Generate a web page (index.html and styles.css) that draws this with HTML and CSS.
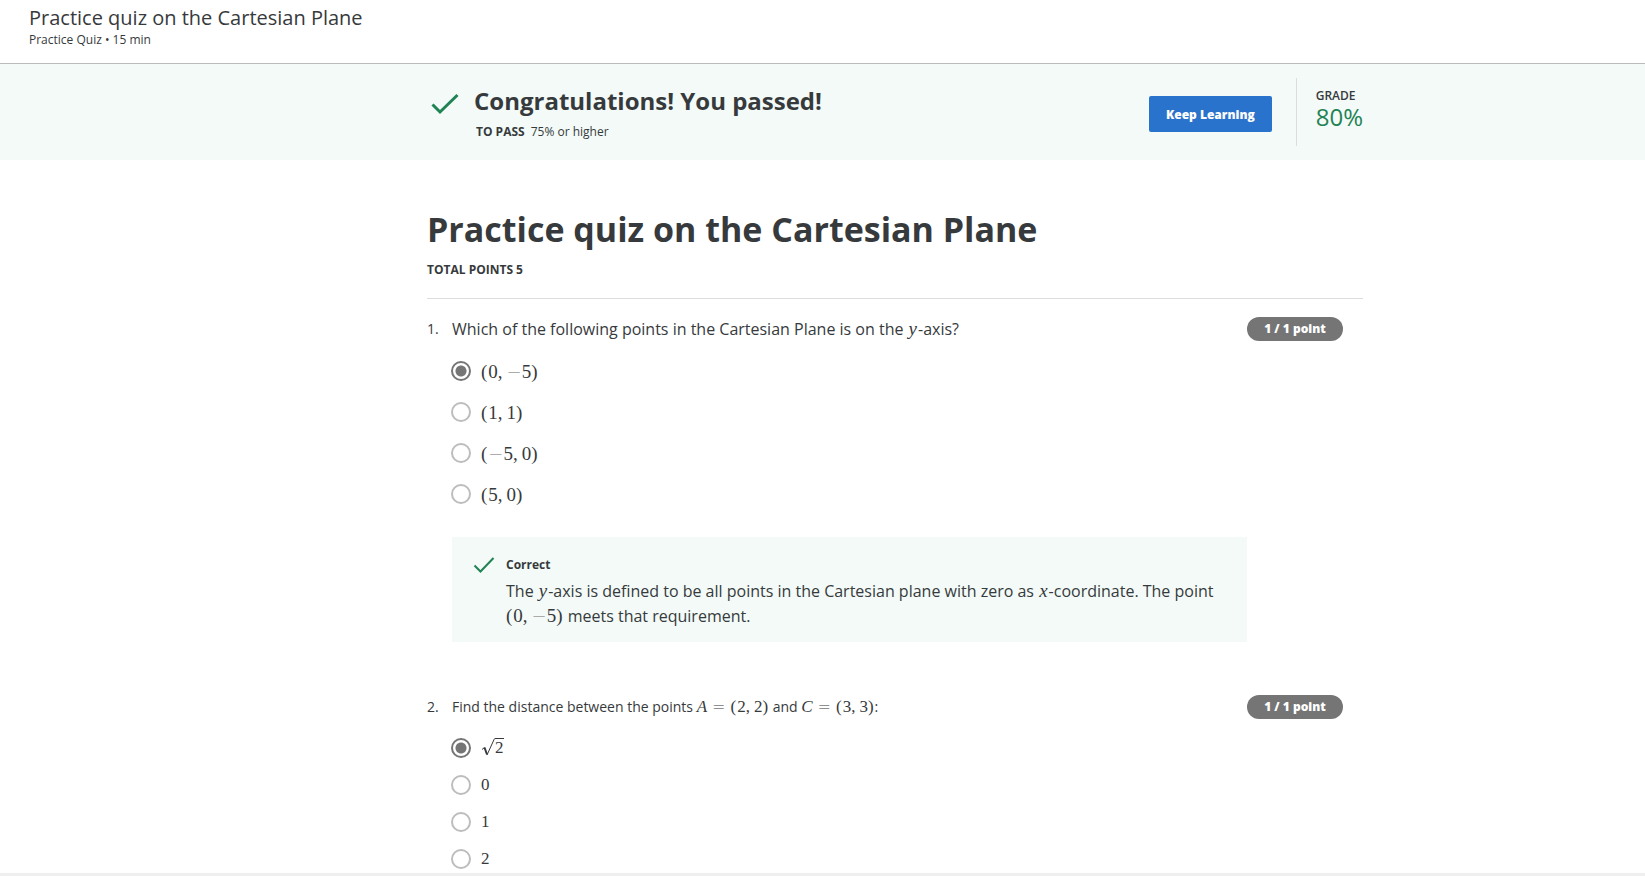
FILE: index.html
```html
<!DOCTYPE html>
<html lang="en">
<head>
<meta charset="utf-8">
<title>Practice quiz on the Cartesian Plane</title>
<link rel="stylesheet" href="styles.css">
</head>
<body>
<header class="topbar">
  <p class="topbar-title">Practice quiz on the Cartesian Plane</p>
  <p class="topbar-meta">Practice Quiz • 15 min</p>
</header>

<section class="banner">
  <div class="banner-inner">
    <svg class="banner-check" viewBox="0 0 28 22" aria-hidden="true"><path d="M1.5 11.5 9 19 26.500 2"/></svg>
    <div class="banner-text">
      <h2 class="banner-title">Congratulations! You passed!</h2>
      <p class="banner-pass"><strong>TO PASS</strong><span>75% or higher</span></p>
    </div>
    <button class="keep" type="button">Keep Learning</button>
    <div class="grade">
      <span class="grade-label">GRADE</span>
      <span class="grade-value">80%</span>
    </div>
  </div>
</section>

<main class="quiz">
  <h1 class="quiz-title">Practice quiz on the Cartesian Plane</h1>
  <p class="quiz-points">TOTAL POINTS 5</p>

  <section class="question question-large">
    <span class="number">1.</span>
    <div class="body">
      <p class="prompt" id="q1">Which of the following points in the Cartesian Plane is on the <i class="var">y</i>-axis?</p>
      <div class="options" role="radiogroup" aria-labelledby="q1">
        <label class="option"><input type="radio" name="q1" checked><span class="math"><span class="paren">(</span>0<span class="comma">,</span><span class="op">−</span>5<span class="paren">)</span></span></label>
        <label class="option"><input type="radio" name="q1"><span class="math"><span class="paren">(</span>1<span class="comma">,</span>1<span class="paren">)</span></span></label>
        <label class="option"><input type="radio" name="q1"><span class="math"><span class="paren">(</span><span class="op">−</span>5<span class="comma">,</span>0<span class="paren">)</span></span></label>
        <label class="option"><input type="radio" name="q1"><span class="math"><span class="paren">(</span>5<span class="comma">,</span>0<span class="paren">)</span></span></label>
      </div>
      <div class="feedback">
        <svg class="feedback-check" viewBox="0 0 22 18" aria-hidden="true"><path d="M1.500 9.500 7.500 15.500 20.500 2"/></svg>
        <div>
          <p class="feedback-title">Correct</p>
          <p class="feedback-text">The <i class="var">y</i>-axis is defined to be all points in the Cartesian plane with zero as <i class="var">x</i>-coordinate. The point <span class="math"><span class="paren">(</span>0<span class="comma">,</span><span class="op">−</span>5<span class="paren">)</span></span> meets that requirement.</p>
        </div>
      </div>
    </div>
    <span class="pill">1 / 1 point</span>
  </section>

  <section class="question question-small">
    <span class="number">2.</span>
    <div class="body">
      <p class="prompt" id="q2">Find the distance between the points <span class="math"><i>A</i><span class="rel">=</span><span class="paren">(</span>2<span class="comma">,</span>2<span class="paren">)</span></span> and <span class="math"><i>C</i><span class="rel">=</span><span class="paren">(</span>3<span class="comma">,</span>3<span class="paren">)</span></span>:</p>
      <div class="options" role="radiogroup" aria-labelledby="q2">
        <label class="option"><input type="radio" name="q2" checked><span class="math root"><svg class="radical" viewBox="0 0 14 19" role="img" aria-label="square root of"><path class="thin" d="M1 11.500 3.500 9.500"/><path class="thick" d="M3.500 9.500 6 16.500"/><path class="thin" d="M6 17 13.500 .500"/></svg><span class="radicand">2</span></span></label>
        <label class="option"><input type="radio" name="q2"><span class="math">0</span></label>
        <label class="option"><input type="radio" name="q2"><span class="math">1</span></label>
        <label class="option"><input type="radio" name="q2"><span class="math">2</span></label>
      </div>
    </div>
    <span class="pill">1 / 1 point</span>
  </section>
</main>
<footer class="bottom-edge"></footer>
</body>
</html>
```
FILE: styles.css
```css
* { box-sizing: border-box; }

body {
  margin: 0;
  height: 100vh;
  display: flex;
  flex-direction: column;
  background: #fff;
  color: #373a3c;
  font-family: "Open Sans", sans-serif;
  font-size: 16px;
}

h1, h2, p { margin: 0; }

.topbar {
  padding: 6px 29px 14px;
  border-bottom: 1px solid #bbb;
}
.topbar-title { font-size: 20px; line-height: 24px; }
.topbar-meta { padding-top: 1px; font-size: 12px; line-height: 18px; }

.banner { background: #f3faf8; padding-left: 145px; }
.banner-inner {
  max-width: 936px;
  margin: 0 auto;
  padding: 14px 0 14px 4px;
  display: flex;
  align-items: flex-start;
}
.banner-check {
  width: 28px;
  height: 22px;
  margin-top: 15px;
  fill: none;
  stroke: #1f8354;
  stroke-width: 3;
}
.banner-text { flex: 1; padding: 5px 0 0 15px; }
.banner-title { font-size: 24px; line-height: 36px; }
.banner-pass {
  display: flex;
  gap: 6px;
  padding: 4px 0 0 2px;
  font-size: 12px;
  line-height: 18px;
}
.keep {
  height: 36px;
  margin: 18px 24px 0 0;
  padding: 0 17px;
  border: 0;
  border-radius: 2px;
  background: #2a73cc;
  color: #fff;
  font-family: inherit;
  font-size: 12px;
  font-weight: 800;
}
.grade {
  height: 68px;
  padding: 10px 0 0 19px;
  border-left: 1px solid #ddd;
  display: flex;
  flex-direction: column;
}
.grade-label { font-size: 12px; line-height: 16px; font-weight: 600; }
.grade-value { font-size: 24px; line-height: 26px; color: #1f8354; }

.quiz {
  width: 100%;
  max-width: 1081px;
  min-height: 0;
  margin: 0 auto;
  padding: 44px 0 0 145px;
  flex: 1;
  overflow-y: auto;
  scrollbar-width: none;
}
.quiz-title { font-size: 34px; line-height: 50px; }
.quiz-points {
  padding: 7px 0 19px;
  border-bottom: 1px solid #ddd;
  font-size: 12px;
  line-height: 18px;
  font-weight: 700;
}

.question {
  display: grid;
  grid-template-columns: 25px 1fr 96px;
  padding-right: 20px;
}
.number { font-size: 14px; line-height: 24px; }
.question-large { padding-top: 18px; }
.question-small { padding-top: 53px; }
.question-large .prompt { line-height: 24px; }
.question-small .prompt { font-size: 14px; line-height: 24px; }

.options { display: flex; flex-direction: column; }
.question-large .options { padding-top: 9px; }
.question-small .options { padding-top: 10px; }
.option { display: flex; align-items: center; gap: 10px; }
.question-large .option { height: 41px; }
.question-small .option { height: 37px; }
.option input {
  appearance: none;
  width: 20px;
  height: 20px;
  margin: 0 0 0 -1px;
  border: 2px solid #bdbdbd;
  border-radius: 50%;
}
.option input:checked {
  border-color: #757575;
  background: radial-gradient(circle, #757575 5px, #fff 6px);
}

.math, .var {
  font-family: "Liberation Serif", serif;
  white-space: nowrap;
}
.math { font-size: 19px; line-height: 20px; }
.var { margin: 0 1px; font-size: 19px; line-height: 20px; }
.question-small .math { font-size: 17px; }
.question-large .option .math { padding-top: 2px; }
.paren { margin-right: 1px; }
.comma { margin-right: 4px; }
.op, .rel { font-family: "DejaVu Sans", sans-serif; font-weight: 200; }
.op { font-size: 18px; color: #999; }
.rel { margin: 0 5px; font-size: 16px; }

.root { display: flex; align-items: flex-start; }
.radical { width: 14px; height: 19px; fill: none; stroke: #373a3c; }
.radical .thin { stroke-width: 1; }
.radical .thick { stroke-width: 2; }
.radicand { border-top: 1px solid #373a3c; line-height: 18px; }

.feedback {
  margin-top: 23px;
  padding: 15px 20px 13px 21px;
  display: flex;
  gap: 11px;
  background: #f3faf8;
}
.feedback-check {
  flex: none;
  width: 22px;
  height: 18px;
  margin-top: 4px;
  fill: none;
  stroke: #1f8354;
  stroke-width: 2;
}
.feedback-title { padding-bottom: 1px; font-size: 12px; line-height: 26px; font-weight: 700; }
.feedback-text { line-height: 25px; }

.pill {
  height: 24px;
  border-radius: 12px;
  background: #757575;
  color: #fff;
  font-size: 12px;
  line-height: 24px;
  font-weight: 800;
  text-align: center;
}

.bottom-edge { height: 3px; background: #efefef; }
```
